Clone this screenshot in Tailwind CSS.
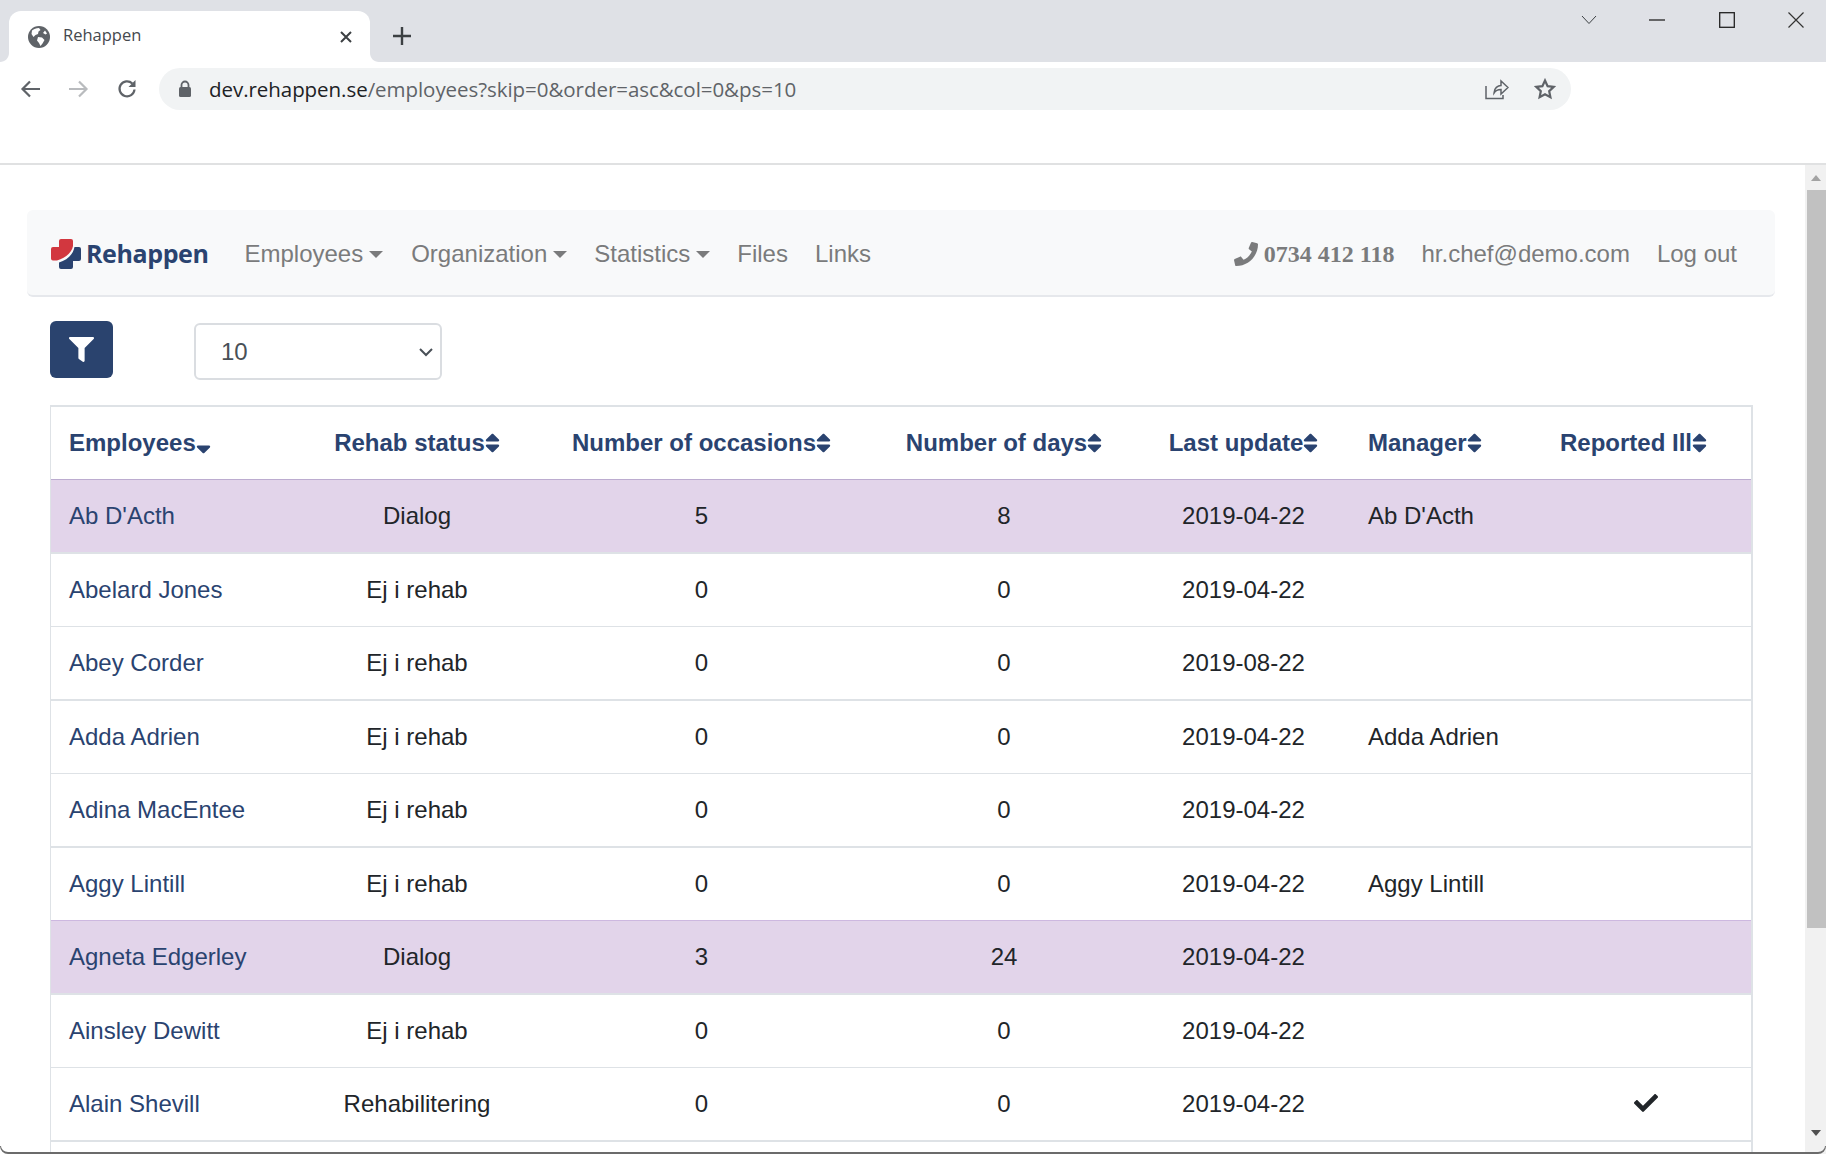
<!DOCTYPE html>
<html lang="en">
<head>
  <meta charset="UTF-8" />
  <title>Rehappen</title>
  <script src="https://cdn.jsdelivr.net/npm/@tailwindcss/browser@4"></script>
</head>
<body class="w-[1826px] h-[1154px] overflow-hidden bg-white relative font-['Liberation_Sans',sans-serif] text-[24px] text-[#212529]">

  <!-- browser tab strip -->
  <div class="h-[62px] bg-[#dfe1e6] flex items-end pl-[9px] relative">
    <div class="w-[361px] h-[51px] bg-white rounded-t-[12px] relative flex items-center pl-[19px] pr-[16px] font-['Open_Sans',sans-serif] text-[16.5px] text-[#45494e]">
      <svg class="absolute left-[-9px] bottom-0" width="9" height="9" viewBox="0 0 9 9"><path d="M9 0V9H0C5 9 9 5 9 0z" fill="#fff"/></svg>
      <svg class="absolute right-[-9px] bottom-0" width="9" height="9" viewBox="0 0 9 9"><path d="M0 0V9H9C4 9 0 5 0 0z" fill="#fff"/></svg>
      <svg class="w-[22px] h-[22px] mr-[13px]" viewBox="0 0 22 22"><circle cx="11" cy="11" r="11" fill="#5f6368"/><path d="M4 4.500c2-1.500 4-2.500 7-2.500l1.500 2-2 1.500-.5 2.500-2.500 1-2 2-2-3zM10 11l4 .5 2.500 2.500-2 3.500-2 2.500-1.500-3-2-2.500zM17 4.500l2 3-1.500 1-2.500-1.500z" fill="#fff"/></svg>
      <span class="flex-1 mb-[2px]">Rehappen</span>
      <svg width="14" height="14" viewBox="0 0 14 14" class="mr-[1px]"><path d="M2 2l10 10M12 2L2 12" stroke="#3c4043" stroke-width="2"/></svg>
    </div>
    <svg class="ml-[22px] mb-[16px]" width="20" height="20" viewBox="0 0 20 20"><path d="M10 1v18M1 10h18" stroke="#3c4043" stroke-width="2.400"/></svg>
    <div class="ml-auto pr-[22px] flex items-center h-[40px] mb-[22px]">
      <svg width="16" height="10" viewBox="0 0 16 10"><path d="M1 1l7 7.500L15 1" fill="none" stroke="#3c4043" stroke-width="1"/></svg>
      <svg class="ml-[52px]" width="16" height="2" viewBox="0 0 16 2"><path d="M0 1h16" stroke="#222" stroke-width="1.300"/></svg>
      <svg class="ml-[54px]" width="16" height="16" viewBox="0 0 16 16"><rect x=".7" y=".7" width="14.600" height="14.600" fill="none" stroke="#222" stroke-width="1.300"/></svg>
      <svg class="ml-[53px]" width="16" height="16" viewBox="0 0 16 16"><path d="M.5.500l15 15M15.500.500l-15 15" stroke="#333" stroke-width="1.200"/></svg>
    </div>
  </div>

  <!-- browser toolbar -->
  <div class="h-[103px] border-b-[2px] border-[#e0e1e2] bg-white pt-[6px]">
    <div class="flex items-center h-[42px]">
      <svg class="ml-[20px]" width="21" height="18" viewBox="0 0 21 18"><path d="M20 9H3M10 1.500L2.500 9l7.500 7.500" fill="none" stroke="#5f6368" stroke-width="2.200"/></svg>
      <svg class="ml-[27px]" width="21" height="18" viewBox="0 0 21 18"><path d="M1 9h17M11 1.500L18.500 9 11 16.500" fill="none" stroke="#b9bbbe" stroke-width="2.200"/></svg>
      <svg class="ml-[27px]" width="22" height="22" viewBox="0 0 22 22"><path d="M18.500 11.500a7.500 7.500 0 1 1-2.200-6" fill="none" stroke="#5f6368" stroke-width="2.200"/><path d="M19.500 2v7h-7z" fill="#5f6368"/></svg>
      <div class="ml-[21px] w-[1412px] h-[42px] rounded-[21px] bg-[#f1f3f4] flex items-center pl-[19px] pr-[15px]">
        <svg width="14" height="18" viewBox="0 0 14 18"><path d="M3.500 7V5a3.500 3.500 0 0 1 7 0v2" fill="none" stroke="#5f6368" stroke-width="1.800"/><rect x="1" y="7" width="12" height="10" rx="1.500" fill="#5f6368"/></svg>
        <span class="ml-[17px] font-['Open_Sans',sans-serif] text-[20.5px] tracking-[-0.05px] text-[#5f6368] flex-1"><span class="text-[#202124]">dev.rehappen.se</span>/employees?skip=0&amp;order=asc&amp;col=0&amp;ps=10</span>
        <svg width="24" height="22" viewBox="0 0 24 22"><path d="M1 8v12.500h17V17M9 15c0-5 4-7.500 7-7.500V3l7 6.500-7 6.500v-4.500c-3 0-5.500 1-7 3.500z" fill="none" stroke="#5f6368" stroke-width="1.500"/></svg>
        <svg class="ml-[25px]" width="22" height="22" viewBox="0 0 22 22"><path d="M11 2.500l2.600 5.700 6.100.7-4.500 4.200 1.200 6.100L11 16.200l-5.400 3 1.200-6.100L2.300 8.900l6.100-.7z" fill="none" stroke="#5f6368" stroke-width="2.200"/></svg>
      </div>
    </div>
  </div>

  <div class="flex h-[989px]">
    <!-- page -->
    <div class="flex-1 overflow-hidden pt-[45px] pl-[27px] pr-[30px]">
      <nav class="h-[87px] w-[1748px] bg-[#f8f9fa] border-b-[2px] border-[#e6e8ec] rounded-[6px] flex items-center pt-[2px] pl-[24px] pr-[26px] text-[#7a7b7c]">
        <svg class="w-[30px] h-[30px]" viewBox="0 0 30 30">
          <path d="M8 2a2 2 0 0 1 2-2h10a2 2 0 0 1 2 2v5C21 13 15 19 6 21.500H2a2 2 0 0 1-2-2V10a2 2 0 0 1 2-2h6z" fill="#d2373f"/>
          <path d="M23.500 8H28a2 2 0 0 1 2 2v10a2 2 0 0 1-2 2h-6v6a2 2 0 0 1-2 2H10a2 2 0 0 1-2-2v-4.500C16 21 22 16 23.500 8z" fill="#2a4370"/>
        </svg>
        <span class="ml-[5px] mr-[24px] font-['Open_Sans',sans-serif] font-bold text-[25px] tracking-[-0.4px] text-[#2a4370]">Rehappen</span>
        <a class="px-[12px]">Employees<i class="inline-block ml-[6px] align-[4px] border-x-[7px] border-t-[7px] border-x-transparent border-t-[#7a7b7c]"></i></a>
        <a class="px-[12px] ml-[4px]">Organization<i class="inline-block ml-[6px] align-[4px] border-x-[7px] border-t-[7px] border-x-transparent border-t-[#7a7b7c]"></i></a>
        <a class="px-[12px] ml-[3px]">Statistics<i class="inline-block ml-[6px] align-[4px] border-x-[7px] border-t-[7px] border-x-transparent border-t-[#7a7b7c]"></i></a>
        <a class="px-[12px] ml-[3px]">Files</a>
        <a class="px-[12px] ml-[3px]">Links</a>
        <a class="ml-auto px-[12px] flex items-center font-['Liberation_Serif',serif] font-bold">
          <svg class="w-[24px] h-[24px] mr-[6px] -scale-x-100" viewBox="0 0 512 512"><path fill="#7a7b7c" d="M18.600 24.600l104-24c11.300-2.600 22.900 3.300 27.500 13.900l48 112c4.200 9.800 1.400 21.300-6.900 28l-60.600 49.600c36 76.700 98.900 140.500 177.200 177.200l49.600-60.600c6.800-8.300 18.200-11.100 28-6.900l112 48c10.700 4.700 16.600 16.300 14 27.600l-24 104c-2.500 10.800-12.100 18.600-23.400 18.600C208 512 0 304.500 0 48c0-11.200 7.700-20.900 18.600-23.400z"/></svg>
          0734 412 118
        </a>
        <a class="px-[12px] ml-[3px]">hr.chef@demo.com</a>
        <a class="px-[12px] ml-[3px]">Log out</a>
      </nav>

      <div class="mt-[24px] pl-[23px] flex items-start h-[61px]">
        <button class="w-[63px] h-[57px] bg-[#2a436e] rounded-[6px] flex items-center justify-center">
          <svg class="w-[25px] h-[25px]" viewBox="0 0 512 512"><path fill="#fff" d="M487.976 0H24.028C2.710 0-8.047 25.866 7.058 40.971L192 225.941V432c0 7.831 3.821 15.170 10.237 19.662l80 55.980C298.020 518.690 320 507.493 320 487.980V225.941l184.947-184.970C520.021 25.896 509.338 0 487.976 0z"/></svg>
        </button>
        <div class="ml-[81px] mt-[2px] w-[248px] h-[57px] border-[2px] border-[#dadde1] rounded-[6px] flex items-center pl-[25px] pr-[7px] text-[#495057]">
          <span class="flex-1">10</span>
          <svg width="14" height="10" viewBox="0 0 14 10"><path d="M1 2l6 6 6-6" fill="none" stroke="#495057" stroke-width="2"/></svg>
        </div>
      </div>

      <table class="ml-[23px] mt-[23px] w-[1703px] table-fixed border-separate border-spacing-0 border-l-[1px] border-r-[2px] border-t-[2px] border-[#dee2e6]">
        <colgroup>
          <col class="w-[251px]" /><col class="w-[230px]" /><col class="w-[339px]" /><col class="w-[266px]" /><col class="w-[213px]" /><col class="w-[192px]" /><col class="w-[209px]" />
        </colgroup>
        <thead class="text-[#2a4370] font-bold">
          <tr class="h-[73px]">
            <th class="border-b-[1px] border-[#bcacd0] pl-[18px] text-left whitespace-nowrap">Employees<svg class="inline w-[15px] h-[24px] align-[-5px]" viewBox="0 0 320 512"><path fill="#2a4370" d="M41 288h238c21.400 0 32.100 25.900 17 41L177 448c-9.400 9.400-24.600 9.400-33.900 0L24 329c-15.100-15.100-4.400-41 17-41z"/></svg></th>
            <th class="border-b-[1px] border-[#bcacd0] whitespace-nowrap">Rehab status<svg class="inline w-[15px] h-[24px] align-[-4px]" viewBox="0 0 320 512"><path fill="#2a4370" d="M41 288h238c21.400 0 32.100 25.900 17 41L177 448c-9.400 9.400-24.600 9.400-33.900 0L24 329c-15.100-15.100-4.400-41 17-41zm255-105L177 64c-9.400-9.400-24.600-9.400-33.900 0L24 183c-15.100 15.100-4.400 41 17 41h238c21.400 0 32.100-25.900 17-41z"/></svg></th>
            <th class="border-b-[1px] border-[#bcacd0] whitespace-nowrap">Number of occasions<svg class="inline w-[15px] h-[24px] align-[-4px]" viewBox="0 0 320 512"><path fill="#2a4370" d="M41 288h238c21.400 0 32.100 25.900 17 41L177 448c-9.400 9.400-24.600 9.400-33.900 0L24 329c-15.100-15.100-4.400-41 17-41zm255-105L177 64c-9.400-9.400-24.600-9.400-33.900 0L24 183c-15.100 15.100-4.400 41 17 41h238c21.400 0 32.100-25.900 17-41z"/></svg></th>
            <th class="border-b-[1px] border-[#bcacd0] whitespace-nowrap">Number of days<svg class="inline w-[15px] h-[24px] align-[-4px]" viewBox="0 0 320 512"><path fill="#2a4370" d="M41 288h238c21.400 0 32.100 25.900 17 41L177 448c-9.400 9.400-24.600 9.400-33.900 0L24 329c-15.100-15.100-4.400-41 17-41zm255-105L177 64c-9.400-9.400-24.600-9.400-33.900 0L24 183c-15.100 15.100-4.400 41 17 41h238c21.400 0 32.100-25.900 17-41z"/></svg></th>
            <th class="border-b-[1px] border-[#bcacd0] whitespace-nowrap">Last update<svg class="inline w-[15px] h-[24px] align-[-4px]" viewBox="0 0 320 512"><path fill="#2a4370" d="M41 288h238c21.400 0 32.100 25.900 17 41L177 448c-9.400 9.400-24.600 9.400-33.900 0L24 329c-15.100-15.100-4.400-41 17-41zm255-105L177 64c-9.400-9.400-24.600-9.400-33.900 0L24 183c-15.100 15.100-4.400 41 17 41h238c21.400 0 32.100-25.900 17-41z"/></svg></th>
            <th class="border-b-[1px] border-[#bcacd0] pl-[18px] text-left whitespace-nowrap">Manager<svg class="inline w-[15px] h-[24px] align-[-4px]" viewBox="0 0 320 512"><path fill="#2a4370" d="M41 288h238c21.400 0 32.100 25.900 17 41L177 448c-9.400 9.400-24.600 9.400-33.900 0L24 329c-15.100-15.100-4.400-41 17-41zm255-105L177 64c-9.400-9.400-24.600-9.400-33.900 0L24 183c-15.100 15.100-4.400 41 17 41h238c21.400 0 32.100-25.900 17-41z"/></svg></th>
            <th class="border-b-[1px] border-[#bcacd0] pl-[18px] text-left whitespace-nowrap">Reported Ill<svg class="inline w-[15px] h-[24px] align-[-4px]" viewBox="0 0 320 512"><path fill="#2a4370" d="M41 288h238c21.400 0 32.100 25.900 17 41L177 448c-9.400 9.400-24.600 9.400-33.900 0L24 329c-15.100-15.100-4.400-41 17-41zm255-105L177 64c-9.400-9.400-24.600-9.400-33.900 0L24 183c-15.100 15.100-4.400 41 17 41h238c21.400 0 32.100-25.900 17-41z"/></svg></th>
          </tr>
        </thead>
        <tbody class="text-center [&>tr>td]:border-[#dee2e6] [&>tr:nth-child(odd)]:h-[74px] [&>tr:nth-child(even)]:h-[73px] [&>tr:nth-child(odd)>td]:border-b-[2px] [&>tr:nth-child(even)>td]:border-b-[1px] [&>tr:nth-child(6)>td]:border-[#cdb8e0]">
          <tr class="bg-[#e2d4ea]">
            <td class="pl-[18px] text-left text-[#2a4370]">Ab D'Acth</td><td>Dialog</td><td>5</td><td>8</td><td>2019-04-22</td><td class="pl-[18px] text-left">Ab D'Acth</td><td></td>
          </tr>
          <tr>
            <td class="pl-[18px] text-left text-[#2a4370]">Abelard Jones</td><td>Ej i rehab</td><td>0</td><td>0</td><td>2019-04-22</td><td class="pl-[18px] text-left"></td><td></td>
          </tr>
          <tr>
            <td class="pl-[18px] text-left text-[#2a4370]">Abey Corder</td><td>Ej i rehab</td><td>0</td><td>0</td><td>2019-08-22</td><td class="pl-[18px] text-left"></td><td></td>
          </tr>
          <tr>
            <td class="pl-[18px] text-left text-[#2a4370]">Adda Adrien</td><td>Ej i rehab</td><td>0</td><td>0</td><td>2019-04-22</td><td class="pl-[18px] text-left">Adda Adrien</td><td></td>
          </tr>
          <tr>
            <td class="pl-[18px] text-left text-[#2a4370]">Adina MacEntee</td><td>Ej i rehab</td><td>0</td><td>0</td><td>2019-04-22</td><td class="pl-[18px] text-left"></td><td></td>
          </tr>
          <tr>
            <td class="pl-[18px] text-left text-[#2a4370]">Aggy Lintill</td><td>Ej i rehab</td><td>0</td><td>0</td><td>2019-04-22</td><td class="pl-[18px] text-left">Aggy Lintill</td><td></td>
          </tr>
          <tr class="bg-[#e2d4ea]">
            <td class="pl-[18px] text-left text-[#2a4370]">Agneta Edgerley</td><td>Dialog</td><td>3</td><td>24</td><td>2019-04-22</td><td class="pl-[18px] text-left"></td><td></td>
          </tr>
          <tr>
            <td class="pl-[18px] text-left text-[#2a4370]">Ainsley Dewitt</td><td>Ej i rehab</td><td>0</td><td>0</td><td>2019-04-22</td><td class="pl-[18px] text-left"></td><td></td>
          </tr>
          <tr>
            <td class="pl-[18px] text-left text-[#2a4370]">Alain Shevill</td><td>Rehabilitering</td><td>0</td><td>0</td><td>2019-04-22</td><td class="pl-[18px] text-left"></td>
            <td class="pr-[2px]"><svg class="inline w-[24px] h-[24px] align-[-3px]" viewBox="0 0 512 512"><path fill="#212529" d="M173.898 439.404l-166.400-166.400c-9.997-9.997-9.997-26.206 0-36.204l36.203-36.204c9.997-9.998 26.207-9.998 36.204 0L192 312.690 432.095 72.596c9.997-9.997 26.207-9.997 36.204 0l36.203 36.204c9.997 9.997 9.997 26.206 0 36.204l-294.400 294.401c-9.998 9.997-26.207 9.997-36.204-.001z"/></svg></td>
          </tr>
          <tr><td colspan="7"></td></tr>
        </tbody>
      </table>
    </div>

    <!-- page scrollbar -->
    <div class="w-[21px] bg-[#f1f1f1] flex flex-col items-center">
      <div class="h-[25px] w-full flex items-center justify-center"><i class="border-x-[5px] border-b-[6px] border-x-transparent border-b-[#a3a3a3]"></i></div>
      <div class="h-[738px] w-[19px] ml-[2px] bg-[#c1c1c1]"></div>
      <div class="mt-auto h-[24px] w-full flex items-start justify-center"><i class="border-x-[5px] border-t-[6px] border-x-transparent border-t-[#505050]"></i></div>
    </div>
  </div>

  <!-- window frame, lies over the page -->
  <div class="absolute left-0 right-0 bottom-0 h-[8px] border-b-[2px] border-x-[1px] border-[#6b6b6b] border-t-0 rounded-b-[8px] pointer-events-none [clip-path:polygon(0_0,8px_0,8px_6px,calc(100%-8px)_6px,calc(100%-8px)_0,100%_0,100%_100%,0_100%)]"></div>
</body>
</html>
